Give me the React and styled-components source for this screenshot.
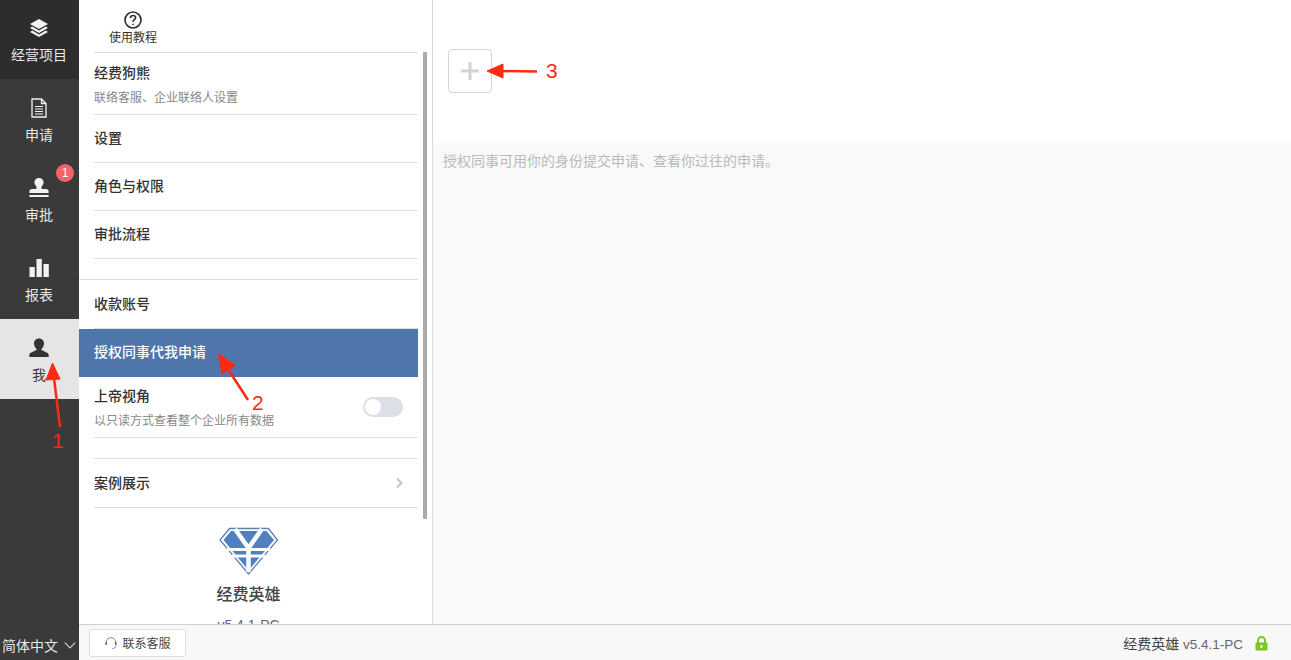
import React from "react";
import styled, { createGlobalStyle } from "styled-components";

const GlobalStyle = createGlobalStyle`
  html, body { margin: 0; padding: 0; height: 100%; overflow: hidden; }
  body {
    font-family: "Liberation Sans", "Noto Sans CJK SC", sans-serif;
    background: #fff;
  }
  * { box-sizing: border-box; }
`;

const Page = styled.div`
  position: relative;
  display: flex;
  width: 1291px;
  height: 660px;
  overflow: hidden;
`;

const Sidebar = styled.nav`
  width: 79px;
  flex: none;
  display: flex;
  flex-direction: column;
  background: #3a3a3a;
`;

const NavItem = styled.div`
  height: ${(p) => (p.$first ? 79 : 80)}px;
  flex: none;
  display: flex;
  flex-direction: column;
  align-items: center;
  padding: ${(p) => (p.$first ? 18 : 19)}px 1px 0 0;
  position: relative;
  background: ${(p) => (p.$active ? "#e5e5e5" : p.$first ? "#2d2d2d" : "transparent")};
  color: ${(p) => (p.$active ? "#3a3a3a" : "#e8e8e8")};
`;

const NavIcon = styled.div`
  height: 20px;
  display: flex;
  align-items: center;
  justify-content: center;
`;

const NavLabel = styled.div`
  margin-top: 8px;
  font-size: 14px;
  line-height: 18px;
  white-space: nowrap;
`;

const Badge = styled.span`
  position: absolute;
  top: 5px;
  left: 56px;
  width: 18px;
  height: 18px;
  border-radius: 50%;
  background: #f46368;
  color: #fff;
  font-size: 12px;
  line-height: 18px;
  text-align: center;
`;

const LangSwitch = styled.div`
  margin-top: auto;
  height: 30px;
  display: flex;
  align-items: center;
  justify-content: space-between;
  padding: 0 3px 0 2px;
  color: #e8e8e8;
  font-size: 14px;
  white-space: nowrap;
`;

const Main = styled.div`
  flex: 1;
  min-width: 0;
  display: flex;
  flex-direction: column;
`;

const Content = styled.div`
  flex: 1;
  min-height: 0;
  display: flex;
`;

const MenuPanel = styled.section`
  position: relative;
  width: 354px;
  flex: none;
  border-right: 1px solid #d9d9d9;
  overflow: hidden;
`;

const MenuInner = styled.div`
  width: 339px;
`;

const TopTabs = styled.div`
  height: 53px;
  margin-left: 15px;
  border-bottom: 1px solid #dcdcdc;
  display: flex;
  flex-direction: column;
  align-items: flex-start;
  padding: 11px 0 0 15px;
`;

const TopTab = styled.div`
  display: flex;
  flex-direction: column;
  align-items: center;
  color: #333;
  font-size: 12px;
  line-height: 14px;
  gap: 2px;
`;

const Row = styled.div`
  height: ${(p) => p.$height || 48}px;
  margin-left: ${(p) => (p.$active ? 0 : 15)}px;
  padding: 0 15px ${(p) => (p.$height ? 0 : 2)}px ${(p) => (p.$active ? 15 : 0)}px;
  display: flex;
  align-items: center;
  justify-content: space-between;
  background: ${(p) => (p.$active ? "#4e76aa" : "transparent")};
  border-bottom: ${(p) => (p.$active ? "none" : "1px solid #dcdcdc")};
  border-top: ${(p) => (p.$topLine ? "1px solid #dcdcdc" : "none")};
`;

const Group = styled.div`
  margin-top: 20px;
`;

const FullLine = styled.div`
  margin-top: 20px;
  height: 1px;
  background: #dcdcdc;
`;

const RowText = styled.div`
  display: flex;
  flex-direction: column;
  gap: 8px;
  padding-top: 2px;
`;

const RowTitle = styled.div`
  font-size: 14px;
  line-height: 18px;
  font-weight: 500;
  color: ${(p) => (p.$active ? "#fff" : "#333")};
`;

const RowSub = styled.div`
  font-size: 12px;
  line-height: 16px;
  color: #888;
`;

const Toggle = styled.div`
  width: 40px;
  height: 20px;
  border-radius: 10px;
  background: #dcdfe8;
  padding: 2px;
`;

const Knob = styled.div`
  width: 16px;
  height: 16px;
  border-radius: 50%;
  background: #fff;
`;

const About = styled.div`
  display: flex;
  flex-direction: column;
  align-items: center;
  padding-top: 19px;
`;

const AppName = styled.div`
  margin-top: 9px;
  font-size: 16px;
  line-height: 22px;
  font-weight: 500;
  color: #444;
`;

const AppVersion = styled.div`
  margin-top: 10px;
  font-size: 14px;
  line-height: 18px;
  color: #666;
`;

const ScrollThumb = styled.div`
  position: absolute;
  left: 344px;
  top: 52px;
  width: 4px;
  height: 467px;
  background: #aaa;
  border-radius: 1px;
`;

const Detail = styled.section`
  flex: 1;
  min-width: 0;
  display: flex;
  flex-direction: column;
`;

const DetailTop = styled.div`
  height: 143px;
  flex: none;
  padding: 49px 0 0 15px;
`;

const AddButton = styled.div`
  width: 44px;
  height: 44px;
  border: 1px solid #d4d4d4;
  border-radius: 4px;
  display: flex;
  align-items: center;
  justify-content: center;
`;

const DetailBody = styled.div`
  flex: 1;
  background: #f9f9f9;
  padding: 9px 10px;
  color: #b9b9b9;
  font-size: 14px;
  line-height: 18px;
`;

const Footer = styled.footer`
  height: 36px;
  flex: none;
  display: flex;
  align-items: center;
  justify-content: space-between;
  background: #f8f8f8;
  border-top: 1px solid #d0d0d0;
  padding: 0 23px 0 10px;
`;

const SupportButton = styled.div`
  width: 97px;
  height: 28px;
  display: flex;
  align-items: center;
  justify-content: center;
  gap: 4px;
  background: #fff;
  border: 1px solid #dedede;
  border-radius: 3px;
  color: #444;
  font-size: 12px;
`;

const Status = styled.div`
  display: flex;
  align-items: center;
  gap: 12px;
  color: #666;
  font-size: 13.500px;
  padding-top: 1px;
`;

const AppTag = styled.span`
  color: #444;
  font-size: 14px;
`;

const MarkNumber = styled.span`
  position: absolute;
  left: ${(p) => p.$x}px;
  top: ${(p) => p.$y}px;
  color: #ff2a12;
  font-size: 21px;
  line-height: 20px;
`;

const ArrowLayer = styled.svg`
  position: absolute;
  left: 0;
  top: 0;
  pointer-events: none;
`;

function LayersIcon() {
  return (
    <svg width="20" height="20" viewBox="0 0 20 20" fill="#f2f2f2">
      <path d="M10 1 19 6 10 11 1 6z" />
      <path d="M3.200 8.600 10 12.400 16.800 8.600 19 10 10 15 1 10z" />
      <path d="M3.200 12.600 10 16.400 16.800 12.600 19 14 10 19 1 14z" />
    </svg>
  );
}

function FileIcon() {
  return (
    <svg width="16" height="20" viewBox="0 0 16 20" fill="none" stroke="#f2f2f2" strokeWidth="1.300">
      <path d="M1 1h9.500L15 5.500V19H1z" />
      <path d="M10.500 1v4.500H15" />
      <path d="M4 8.500h8M4 11h8M4 13.500h8M4 16h8" strokeWidth="1.100" />
    </svg>
  );
}

function StampIcon() {
  return (
    <svg width="20" height="21" viewBox="0 0 20 21" fill="#f2f2f2">
      <path d="M10 0c2.800 0 4.600 2 4.600 4.300 0 2.200-1.600 3.400-2.200 5-.3.800.2 1.700 1.200 1.700H17c1.600 0 2.600 1 2.600 2.400V15H.4v-1.600C.4 12 1.400 11 3 11h3.400c1 0 1.500-.9 1.200-1.700-.6-1.600-2.200-2.800-2.200-5C5.400 2 7.200 0 10 0z" />
      <rect x="0.400" y="17" width="19.200" height="2" />
    </svg>
  );
}

function BarsIcon() {
  return (
    <svg width="20" height="20" viewBox="0 0 20 20" fill="#f2f2f2">
      <rect x="0.500" y="9" width="5.300" height="10" />
      <rect x="7.500" y="1" width="5.300" height="18" />
      <rect x="14.500" y="6" width="5.300" height="13" />
    </svg>
  );
}

function UserIcon() {
  return (
    <svg width="20" height="20" viewBox="0 0 20 20" fill="#333">
      <path d="M10 .5c3 0 5 2.200 5 5 0 2.300-1 4-2.300 5.200-.5.5-.4 1.300.3 1.600l4.700 2.200c1.300.6 2 1.500 2 2.700V19H.3v-1.800c0-1.200.7-2.100 2-2.700L7 12.300c.7-.3.8-1.100.3-1.600C6 9.500 5 7.800 5 5.500c0-2.800 2-5 5-5z" />
    </svg>
  );
}

function HelpIcon() {
  return (
    <svg width="18" height="18" viewBox="0 0 18 18" fill="none" stroke="#333" strokeWidth="1.700">
      <circle cx="9" cy="9" r="8" />
      <path d="M6.400 7c0-1.500 1.100-2.500 2.600-2.500s2.600 1 2.600 2.300c0 1.900-2.600 1.900-2.600 3.900" />
      <circle cx="9" cy="13.400" r="0.600" fill="#333" strokeWidth="0.600" />
    </svg>
  );
}

function Headset() {
  return (
    <svg width="14" height="14" viewBox="0 0 14 14" fill="none" stroke="#666" strokeWidth="0.800">
      <path d="M2.200 8.500V6.500a4.800 4.800 0 0 1 9.600 0v2" />
      <path d="M2.200 6v3M11.800 6v3" strokeWidth="1.400" />
      <path d="M11.800 9.500c0 2-1.500 3-3.500 3" />
    </svg>
  );
}

function LockIcon() {
  return (
    <svg width="13" height="15" viewBox="0 0 13 15">
      <path d="M3 7V4.500a3.500 3.500 0 0 1 7 0V7" fill="none" stroke="#7cc623" strokeWidth="2" />
      <rect x="0.500" y="6.500" width="12" height="8" rx="1" fill="#7cc623" />
      <rect x="5.600" y="9" width="1.800" height="3" fill="#fff" />
    </svg>
  );
}

function Chevron({ color, width = 10, height = 6 }) {
  return (
    <svg width={width} height={height} viewBox="0 0 10 6" fill="none" stroke={color} strokeWidth="1">
      <path d="M.5.500 5 5 9.500.500" />
    </svg>
  );
}

function RightArrow() {
  return (
    <svg width="8" height="12" viewBox="0 0 8 12" fill="none" stroke="#c8c8c8" strokeWidth="2.200">
      <path d="M2 1.500 6.500 6 2 10.500" />
    </svg>
  );
}

function Plus() {
  return (
    <svg width="18" height="18" viewBox="0 0 18 18" stroke="#d2d2d2" strokeWidth="3">
      <path d="M9 0v18M0 9h18" />
    </svg>
  );
}

function Logo() {
  return (
    <svg width="60" height="48" viewBox="0 0 60 48">
      <path d="M10.500 1.500h39L58.500 13 29.500 47 1 13z" fill="#fff" stroke="#5b83b8" strokeWidth="1.300" />
      <path d="M12 4h35.500L55 13 29.500 43.500 4.500 13z" fill="#4f80c2" />
      <g stroke="#fff" fill="none">
        <path d="M16 2 29.500 21 43 2M29.500 20v25" strokeWidth="4.500" />
        <path d="M8 22.500h43M13 29h33" strokeWidth="2.800" />
      </g>
    </svg>
  );
}

function Arrows() {
  return (
    <ArrowLayer width="1291" height="660" viewBox="0 0 1291 660">
      <g fill="#ff2a12" stroke="#ff2a12" strokeWidth="2.500">
        <path d="M60 427 54 378" fill="none" />
        <path d="M52.500 363 46 380 60 379z" strokeWidth="1" />
        <path d="M248 400 226 366" fill="none" />
        <path d="M218.500 354 222 374 235 365z" strokeWidth="1" />
        <path d="M537 71.500 500 71" fill="none" />
        <path d="M487 71 503 64 503 78z" strokeWidth="1" />
      </g>
    </ArrowLayer>
  );
}

function App() {
  return (
    <Page>
      <GlobalStyle />
      <Sidebar>
        <NavItem $first>
          <NavIcon><LayersIcon /></NavIcon>
          <NavLabel>经营项目</NavLabel>
        </NavItem>
        <NavItem>
          <NavIcon><FileIcon /></NavIcon>
          <NavLabel>申请</NavLabel>
        </NavItem>
        <NavItem>
          <Badge>1</Badge>
          <NavIcon><StampIcon /></NavIcon>
          <NavLabel>审批</NavLabel>
        </NavItem>
        <NavItem>
          <NavIcon><BarsIcon /></NavIcon>
          <NavLabel>报表</NavLabel>
        </NavItem>
        <NavItem $active>
          <NavIcon><UserIcon /></NavIcon>
          <NavLabel>我</NavLabel>
        </NavItem>
        <LangSwitch>
          简体中文
          <Chevron color="#d0d0d0" width={12} height={7} />
        </LangSwitch>
      </Sidebar>
      <Main>
        <Content>
          <MenuPanel>
            <MenuInner>
              <TopTabs>
                <TopTab>
                  <HelpIcon />
                  使用教程
                </TopTab>
              </TopTabs>
              <Row $height={62}>
                <RowText>
                  <RowTitle>经费狗熊</RowTitle>
                  <RowSub>联络客服、企业联络人设置</RowSub>
                </RowText>
              </Row>
              <Row><RowTitle>设置</RowTitle></Row>
              <Row><RowTitle>角色与权限</RowTitle></Row>
              <Row><RowTitle>审批流程</RowTitle></Row>
              <FullLine />
              <Row $height={49}><RowTitle>收款账号</RowTitle></Row>
              <Row $active><RowTitle $active>授权同事代我申请</RowTitle></Row>
              <Row $height={61}>
                <RowText>
                  <RowTitle>上帝视角</RowTitle>
                  <RowSub>以只读方式查看整个企业所有数据</RowSub>
                </RowText>
                <Toggle><Knob /></Toggle>
              </Row>
              <Group>
                <Row $height={50} $topLine>
                  <RowTitle>案例展示</RowTitle>
                  <RightArrow />
                </Row>
              </Group>
              <About>
                <Logo />
                <AppName>经费英雄</AppName>
                <AppVersion>v5.4.1-PC</AppVersion>
              </About>
            </MenuInner>
            <ScrollThumb />
          </MenuPanel>
          <Detail>
            <DetailTop>
              <AddButton><Plus /></AddButton>
            </DetailTop>
            <DetailBody>授权同事可用你的身份提交申请、查看你过往的申请。</DetailBody>
          </Detail>
        </Content>
        <Footer>
          <SupportButton>
            <Headset />
            联系客服
          </SupportButton>
          <Status>
            <span><AppTag>经费英雄</AppTag> v5.4.1-PC</span>
            <LockIcon />
          </Status>
        </Footer>
      </Main>
      <Arrows />
      <MarkNumber $x={52} $y={431}>1</MarkNumber>
      <MarkNumber $x={252} $y={393}>2</MarkNumber>
      <MarkNumber $x={546} $y={61}>3</MarkNumber>
    </Page>
  );
}

export default App;
